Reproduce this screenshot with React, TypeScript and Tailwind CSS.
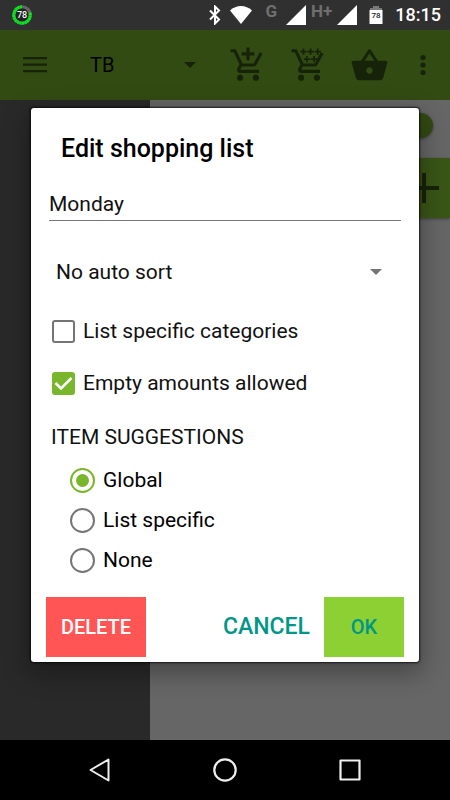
import React, { useState } from 'react'

const cartPath =
  'M7 18c-1.1 0-1.99.9-1.99 2S5.9 22 7 22s2-.9 2-2-.9-2-2-2zm10 0c-1.1 0-1.99.9-1.99 2s.89 2 1.99 2 2-.9 2-2-.9-2-2-2zm-9.83-3.25l.03-.12.9-1.63h7.45c.75 0 1.41-.41 1.75-1.03l3.86-7.01L19.42 4h-.01l-1.1 2-2.76 5H8.53l-.13-.27L6.16 6l-.95-2-.94-2H1v2h2l3.6 7.59-1.35 2.45c-.16.28-.25.61-.25.96 0 1.1.9 2 2 2h12v-2H7.42c-.13 0-.25-.11-.25-.25z'

const suggestions = ['Global', 'List specific', 'None']

const Signal = () => (
  <svg viewBox="0 0 20 20" className="w-5 h-5 fill-white" aria-hidden="true">
    <path d="M20 0v20H0z" />
  </svg>
)

const Caret = ({ className }: { className: string }) => (
  <svg viewBox="0 0 12 6" className={`w-3 h-[6px] pointer-events-none ${className}`} aria-hidden="true">
    <path d="M0 0h12L6 6z" />
  </svg>
)

const StatusBar = () => (
  <div className="h-[30px] bg-[#303030] flex items-center justify-between pl-3 pr-[9px]">
    <svg viewBox="0 0 20 20" className="w-5 h-5" aria-hidden="true">
      <circle cx="10" cy="10" r="8.3" fill="#222" stroke="#6d6d6d" strokeWidth="3" />
      <circle
        cx="10" cy="10" r="8.3" fill="none" stroke="#08ee1c" strokeWidth="3"
        pathLength="100" strokeDasharray="80 20" transform="translate(20 0) scale(-1 1) rotate(-90 10 10)"
      />
      <circle cx="10" cy="10" r="8.3" fill="none" stroke="#303030" strokeWidth="3" strokeOpacity=".5" pathLength="100" strokeDasharray="1 4" />
      <text x="10" y="13" textAnchor="middle" className="fill-white font-medium text-[9px]">78</text>
    </svg>
    <div className="flex items-center">
      <svg viewBox="0 0 12 20" className="w-3 h-5 mr-[9px]" fill="none" stroke="white" strokeWidth="2" aria-hidden="true">
        <path d="M1 5.5l9 9L6 18.500V1.500L10 5.500l-9 9" />
      </svg>
      <svg viewBox="0 0 22 18" className="w-[22px] h-[18px] mr-[13px] fill-white" aria-hidden="true">
        <path d="M0 4.500C6-1.500 16-1.500 22 4.500L11 18z" />
      </svg>
      <span className="text-[17px] leading-5 font-bold text-[#6f6f6f] mr-[9px] pb-2">G</span>
      <Signal />
      <span className="text-[17px] leading-5 font-bold text-[#6f6f6f] mx-[5px] pb-2">H+</span>
      <Signal />
      <svg viewBox="0 0 14 20" className="w-[14px] h-5 mx-3" aria-hidden="true">
        <path d="M4 1h6v2h3v3H1V3h3z" fill="#7a7a7a" />
        <path d="M.5 5h13v14H.5z" fill="white" />
        <text x="7" y="13" textAnchor="middle" className="fill-[#222] font-medium text-[8px]">78</text>
      </svg>
      <time className="text-[18px] leading-6 font-medium text-white">18:15</time>
    </div>
  </div>
)

const AppBar = () => (
  <header className="h-[70px] bg-[#324b13] flex items-center pl-[23px] pr-[5px] text-[#172309]">
    <button aria-label="Menu" className="w-6 h-10 flex items-center">
      <svg viewBox="0 0 24 18" className="w-6 h-[18px] fill-current">
        <path d="M0 1h24v2.200H0zM0 7.500h24v2.200H0zM0 14h24v2.200H0z" />
      </svg>
    </button>
    <div className="flex-1 grid items-center ml-[43px] mr-[21px]">
      <select aria-label="List" className="col-start-1 row-start-1 appearance-none w-full h-10 text-[20px] text-black">
        <option>TB</option>
      </select>
      <Caret className="col-start-1 row-start-1 justify-self-end fill-[#172309]" />
    </div>
    <button aria-label="Add to cart" className="w-[61px] flex justify-center">
      <svg viewBox="0 0 24 24" className="w-[38px] h-[38px] fill-current">
        <path d={cartPath} />
        <path d="M11 9h2V6h3V4h-3V1h-2v3H8v2h3z" />
      </svg>
    </button>
    <button aria-label="Add many to cart" className="w-[61px] flex justify-center">
      <svg viewBox="0 0 24 24" className="w-[38px] h-[38px] fill-current">
        <path d={cartPath} />
        <path
          d="M6.500 3.500h4M8.500 1.500v4M11 3.500h4M13 1.500v4M15.500 3.500h4M17.500 1.500v4M8.700 8.300h4M10.700 6.300v4M13.200 8.300h4M15.200 6.300v4"
          fill="none" stroke="currentColor" strokeWidth="1.100"
        />
      </svg>
    </button>
    <button aria-label="Basket" className="w-[61px] flex justify-center">
      <svg viewBox="0 0 24 24" className="w-[39px] h-[39px] fill-current">
        <path d="M17.210 9l-4.380-6.560c-.190-.280-.510-.420-.830-.420-.320 0-.640.140-.830.430L6.790 9H2c-.550 0-1 .450-1 1 0 .090.010.180.040.270l2.540 9.270c.230.840 1 1.460 1.920 1.460h13c.920 0 1.690-.620 1.930-1.460l2.540-9.270L23 10c0-.550-.450-1-1-1h-4.790zM9 9l3-4.400L15 9H9zm3 8c-1.100 0-2-.900-2-2s.900-2 2-2 2 .900 2 2-.900 2-2 2z" />
      </svg>
    </button>
    <button aria-label="More" className="w-[45px] flex justify-center">
      <svg viewBox="0 0 6 22" className="w-[6px] h-[22px] fill-current">
        <circle cx="3" cy="3.500" r="2.600" />
        <circle cx="3" cy="11" r="2.600" />
        <circle cx="3" cy="18.500" r="2.600" />
      </svg>
    </button>
  </header>
)

const NavBar = () => (
  <nav className="h-[60px] bg-black flex items-center justify-center gap-[101px] text-[#eee]">
    <button aria-label="Back">
      <svg viewBox="0 0 24 24" className="w-6 h-6" fill="none" stroke="currentColor" strokeWidth="2" strokeLinejoin="round">
        <path d="M20.500 1.500v21L2.500 12z" />
      </svg>
    </button>
    <button aria-label="Home">
      <svg viewBox="0 0 24 24" className="w-6 h-6" fill="none" stroke="currentColor" strokeWidth="2.200">
        <circle cx="12" cy="12" r="10.700" />
      </svg>
    </button>
    <button aria-label="Recent apps">
      <svg viewBox="0 0 24 24" className="w-6 h-6" fill="none" stroke="currentColor" strokeWidth="2.200" strokeLinejoin="round">
        <path d="M2.500 2.500h19v19h-19z" />
      </svg>
    </button>
  </nav>
)

interface CheckRowProps {
  label: string
  checked: boolean
  onChange: (value: boolean) => void
}

const CheckRow = ({ label, checked, onChange }: CheckRowProps) => (
  <label className="h-[52px] pl-[21px] flex items-center gap-2">
    <span className="grid">
      <input
        type="checkbox"
        checked={checked}
        onChange={(e) => onChange(e.target.checked)}
        className="col-start-1 row-start-1 appearance-none w-[23px] h-[23px] rounded-[3px] border-2 border-[#757575] checked:bg-[#7ab62c] checked:border-[#7ab62c]"
      />
      {checked && (
        <svg viewBox="0 0 23 23" className="col-start-1 row-start-1 w-[23px] h-[23px] pointer-events-none" fill="none" stroke="white" strokeWidth="2.500">
          <path d="M3.500 11l5.500 5.500L19.500 6" />
        </svg>
      )}
    </span>
    {label}
  </label>
)

const EditDialog = () => {
  const [specific, setSpecific] = useState(false)
  const [empty, setEmpty] = useState(true)
  const [source, setSource] = useState('Global')

  return (
    <form
      role="dialog"
      aria-labelledby="dialog-title"
      className="w-full bg-white rounded-[3px] pt-6 pb-[5px] text-[21px] leading-7 text-[#111] shadow-[0_0_2px_1px_rgba(0,0,0,0.7),0_8px_24px_4px_rgba(0,0,0,0.3)]"
    >
      <h1 id="dialog-title" className="pl-[30px] text-[25px] leading-[34px] font-medium text-black">Edit shopping list</h1>
      <div className="mx-[18px] mt-[22px]">
        <input aria-label="List name" defaultValue="Monday" className="block w-full h-[33px] border-b border-[#777] outline-none" />
      </div>
      <div className="grid items-center mt-8 pl-[25px] pr-[37px]">
        <select aria-label="Sort order" className="col-start-1 row-start-1 appearance-none w-full h-[38px]">
          <option>No auto sort</option>
        </select>
        <Caret className="col-start-1 row-start-1 justify-self-end fill-[#757575]" />
      </div>
      <div className="mt-[14px]">
        <CheckRow label="List specific categories" checked={specific} onChange={setSpecific} />
        <CheckRow label="Empty amounts allowed" checked={empty} onChange={setEmpty} />
      </div>
      <fieldset>
        <legend className="pl-5 pt-[14px] pb-[9px]">ITEM SUGGESTIONS</legend>
        {suggestions.map((item) => (
          <label key={item} className="h-10 pl-[39px] flex items-center gap-2 text-black">
            <span className="grid place-items-center">
              <input
                type="radio"
                name="suggestions"
                checked={source === item}
                onChange={() => setSource(item)}
                className="col-start-1 row-start-1 appearance-none w-[25px] h-[25px] rounded-full border-2 border-[#757575] checked:border-[#7ab62c]"
              />
              {source === item && <span className="col-start-1 row-start-1 w-[13px] h-[13px] rounded-full bg-[#7ab62c] pointer-events-none"></span>}
            </span>
            {item}
          </label>
        ))}
      </fieldset>
      <div className="mt-[17px] px-[15px] flex items-center font-medium text-[#009688]">
        <button type="button" className="w-[100px] h-[60px] bg-[#ff5555] text-[20px] text-white">DELETE</button>
        <button type="button" className="ml-auto mr-[14px] h-[60px] text-[23px]">CANCEL</button>
        <button type="button" className="w-20 h-[60px] bg-[#8cd033] text-[20px]">OK</button>
      </div>
    </form>
  )
}

const App = () => {
  return (
    <div className="min-h-screen flex flex-col font-['Roboto','Noto_Sans',sans-serif]">
      <StatusBar />
      <div className="relative flex-1 flex flex-col">
        <AppBar />
        <main className="flex-1 flex">
          <aside className="w-1/3 bg-[#292929]"></aside>
          <section className="flex-1 bg-[#666] flex flex-col items-end">
            <div className="w-[50px] h-[25px] mt-[13px] mr-[17px] rounded-full bg-[#324b13] shadow-[0_1px_3px_rgba(0,0,0,0.4)]"></div>
            <button aria-label="Add item" className="w-20 h-[60px] mt-5 pr-[11px] flex items-center justify-end bg-[#3a5616] text-[#172309] shadow-[0_1px_3px_rgba(0,0,0,0.4)]">
              <svg viewBox="0 0 30 30" className="w-[30px] h-[30px]" fill="none" stroke="currentColor" strokeWidth="4">
                <path d="M15 0v30M0 15h30" />
              </svg>
            </button>
          </section>
        </main>
        <div className="absolute inset-0 flex items-center px-[31px]">
          <EditDialog />
        </div>
      </div>
      <NavBar />
    </div>
  )
}

export default App
